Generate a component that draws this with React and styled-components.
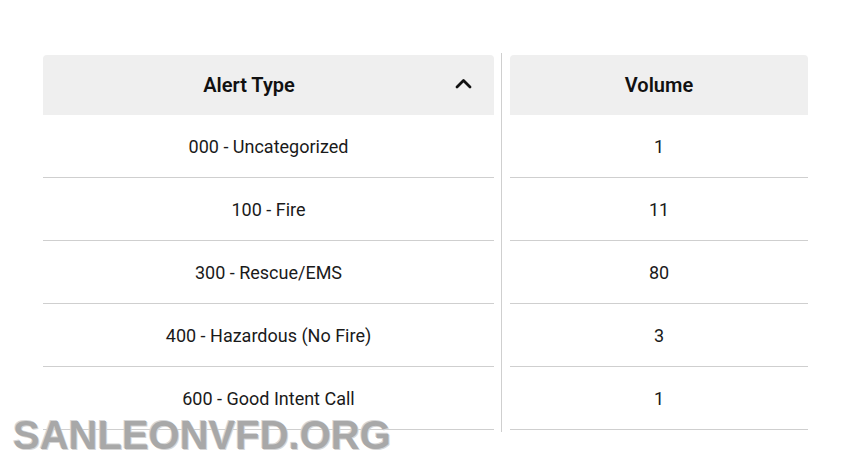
import React from 'react';
import styled, {createGlobalStyle} from 'styled-components';

const GlobalStyle = createGlobalStyle`
    html, body { margin:0; padding:0; background:#fff; }
    body { font-family: Roboto, "Noto Sans", sans-serif; color:#1a1a1a; }
`

const Page = styled.div`
    position: relative;
    width:848px; height:459px;
    overflow:hidden;
    padding: 53px 0 0 43px;
    box-sizing: border-box;
`

const Table = styled.div`
    display:flex; align-items:flex-start;
`

const Column = styled.div`
    width: ${props => props.width}px;
    margin-top: 2px;
    display:flex; flex-direction:column;
`

const Divider = styled.div`
    width:1px; height:379px;
    background:#cfcfcf;
    margin: 0 8px 0 7px;
`

const Header = styled.div`
    height:60px;
    display:flex; align-items:center;
    background:#efefef;
    border-radius:4px 4px 0 0;
    padding-right: ${props => props.sortable ? '22px' : '0'};
`

const HeaderText = styled.div`
    flex:1;
    text-align:center;
    font-size:20px; font-weight:600;
    color:#111;
`

const Chevron = styled.svg`
    width:17px; height:11px;
    margin-top:-3px;
`

const Cell = styled.div`
    height:62px;
    display:flex; align-items:center; justify-content:center;
    border-bottom:1px solid #cfcfcf;
    font-size:18px;
    color:#1a1a1a;
`

const Watermark = styled.div`
    position:absolute; left:13px; top:413px;
    font-family: "Liberation Sans", Arial, sans-serif;
    font-size:40px; font-weight:700;
    color:#a8a8a8;
    text-shadow: 1px 1px 0 #d6d6d6, -1px -1px 0 #d6d6d6;
`

const rows = [
    {type: '000 - Uncategorized', volume: 1},
    {type: '100 - Fire', volume: 11},
    {type: '300 - Rescue/EMS', volume: 80},
    {type: '400 - Hazardous (No Fire)', volume: 3},
    {type: '600 - Good Intent Call', volume: 1},
];

export default function App() {
    return(
        <>
            <GlobalStyle />
            <Page>
                <Table>
                    <Column width={451}>
                        <Header sortable>
                            <HeaderText>Alert Type</HeaderText>
                            <Chevron viewBox="0 0 17 11">
                                <polyline points="2,9 8.5,2.5 15,9" fill="none" stroke="#111" strokeWidth="2.8" strokeLinecap="round" strokeLinejoin="round" />
                            </Chevron>
                        </Header>
                        {rows.map((item) => <Cell key={item.type}>{item.type}</Cell>)}
                    </Column>
                    <Divider />
                    <Column width={298}>
                        <Header>
                            <HeaderText>Volume</HeaderText>
                        </Header>
                        {rows.map((item) => <Cell key={item.type}>{item.volume}</Cell>)}
                    </Column>
                </Table>
                <Watermark>SANLEONVFD.ORG</Watermark>
            </Page>
        </>
    );
}
